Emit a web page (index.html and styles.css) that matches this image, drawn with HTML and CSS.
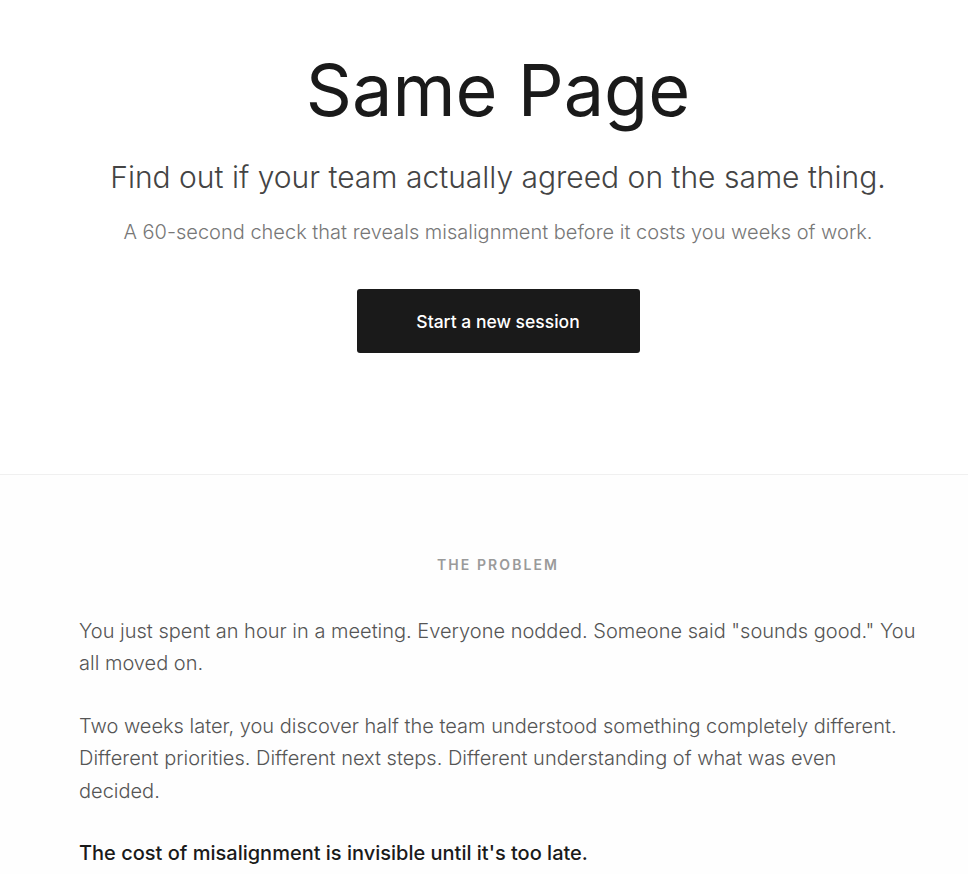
FILE: index.html
```html
<!DOCTYPE html>
<html lang="en">
<head>
<meta charset="utf-8">
<title>Same Page</title>
<link rel="stylesheet" href="styles.css">
</head>
<body>
<header class="hero">
  <div class="hero-inner">
    <h1 class="title">Same Page</h1>
    <p class="tagline">Find out if your team actually agreed on the same thing.</p>
    <p class="subline">A 60-second check that reveals misalignment before it costs you weeks of work.</p>
    <a class="cta" href="#">Start a new session</a>
  </div>
</header>
<section class="problem">
  <div class="problem-inner">
    <h2 class="eyebrow">THE PROBLEM</h2>
    <p class="body-text">You just spent an hour in a meeting. Everyone nodded. Someone said "sounds good." You all moved on.</p>
    <p class="body-text">Two weeks later, you discover half the team understood something completely different. Different priorities. Different next steps. Different understanding of what was even decided.</p>
    <p class="body-text strong">The cost of misalignment is invisible until it's too late.</p>
  </div>
</section>
</body>
</html>
```
FILE: styles.css
```css
* { box-sizing: border-box; }
html, body { margin: 0; padding: 0; background: #ffffff; }
body {
  font-family: Inter, "Noto Sans", sans-serif;
  color: #1a1a1a;
  -webkit-font-smoothing: antialiased;
}
.hero {
  border-bottom: 1px solid #f0f0f0;
  padding: 47px 0 121px 28px;
}
.hero-inner {
  max-width: 838px;
  margin: 0 auto;
  display: flex;
  flex-direction: column;
  align-items: center;
  text-align: center;
}
.title {
  margin: 0;
  font-size: 72px;
  line-height: 1.2;
  font-weight: 400;
  letter-spacing: 0;
  color: #1a1a1a;
}
.tagline {
  margin: 23px 0 0;
  font-size: 30px;
  line-height: 1.4;
  font-weight: 300;
  color: #444444;
}
.subline {
  margin: 19px 0 0;
  font-size: 20px;
  line-height: 1.5;
  font-weight: 300;
  color: #777777;
}
.cta {
  margin-top: 42px;
  display: inline-flex;
  align-items: center;
  justify-content: center;
  width: 283px;
  height: 64px;
  background: #1a1a1a;
  color: #ffffff;
  border-radius: 3px;
  font-size: 17.5px;
  font-weight: 500;
  text-decoration: none;
}
.problem {
  background: #fefefe;
  padding: 80px 0 40px 28px;
}
.problem-inner {
  max-width: 838px;
  margin: 0 auto;
}
.eyebrow {
  margin: 0 0 40px;
  text-align: center;
  font-size: 14px;
  font-weight: 600;
  letter-spacing: 0.15em;
  color: #9a9a9a;
  line-height: 1.4;
}
.body-text {
  margin: 0 0 30px;
  font-size: 20px;
  line-height: 1.625;
  font-weight: 300;
  color: #555555;
}
.body-text.strong {
  font-weight: 500;
  color: #1a1a1a;
}
```
